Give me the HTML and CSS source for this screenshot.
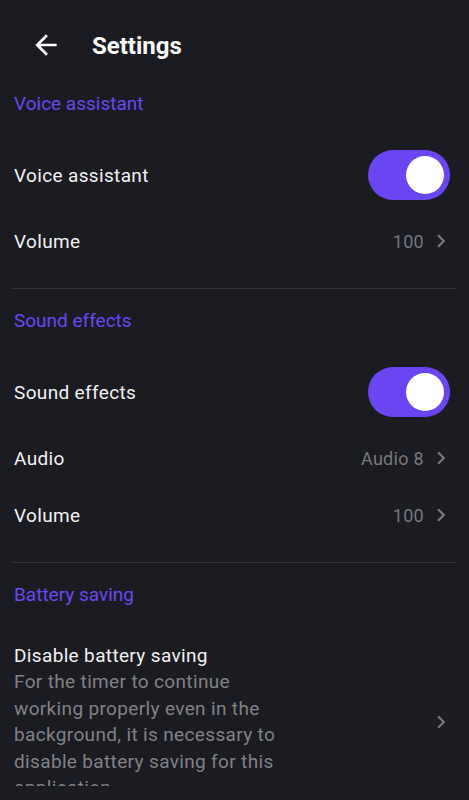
FILE: index.html
```html
<!DOCTYPE html>
<html lang="en">
<head>
<meta charset="utf-8">
<title>Settings</title>
<link rel="stylesheet" href="styles.css">
</head>
<body>
<div class="screen">
  <header class="topbar">
    <svg class="back" viewBox="0 0 24 24" aria-hidden="true"><path d="M20 11H7.83l5.59-5.59L12 4l-8 8 8 8 1.41-1.41L7.83 13H20v-2z"/></svg>
    <h1 class="title">Settings</h1>
  </header>

  <section class="section">
    <h2 class="section-title">Voice assistant</h2>
    <div class="row row-toggle">
      <span class="label">Voice assistant</span>
      <span class="toggle on"><span class="knob"></span></span>
    </div>
    <div class="row">
      <span class="label">Volume</span>
      <span class="value">100</span>
      <svg class="chev" viewBox="0 0 24 24" aria-hidden="true"><path d="M10 6L8.59 7.41 13.17 12l-4.58 4.59L10 18l6-6z"/></svg>
    </div>
  </section>
  <hr class="divider">

  <section class="section">
    <h2 class="section-title">Sound effects</h2>
    <div class="row row-toggle">
      <span class="label">Sound effects</span>
      <span class="toggle on"><span class="knob"></span></span>
    </div>
    <div class="row">
      <span class="label">Audio</span>
      <span class="value">Audio 8</span>
      <svg class="chev" viewBox="0 0 24 24" aria-hidden="true"><path d="M10 6L8.59 7.41 13.17 12l-4.58 4.59L10 18l6-6z"/></svg>
    </div>
    <div class="row">
      <span class="label">Volume</span>
      <span class="value">100</span>
      <svg class="chev" viewBox="0 0 24 24" aria-hidden="true"><path d="M10 6L8.59 7.41 13.17 12l-4.58 4.59L10 18l6-6z"/></svg>
    </div>
  </section>
  <hr class="divider">

  <section class="section">
    <h2 class="section-title">Battery saving</h2>
    <div class="row row-multi">
      <div class="text">
        <div class="label">Disable battery saving</div>
        <div class="desc">For the timer to continue working properly even in the background, it is necessary to disable battery saving for this application</div>
      </div>
      <svg class="chev" viewBox="0 0 24 24" aria-hidden="true"><path d="M10 6L8.59 7.41 13.17 12l-4.58 4.59L10 18l6-6z"/></svg>
    </div>
  </section>
</div>
</body>
</html>
```

FILE: styles.css
```css
* { box-sizing: border-box; }
html, body {
  margin: 0;
  padding: 0;
  background: #1b1c21;
  height: 800px;
}
body {
  font-family: Roboto, "Noto Sans", sans-serif;
  color: #f1f1f3;
}
.screen {
  height: 786px;
  overflow: hidden;
}
.topbar {
  height: 90px;
  display: flex;
  align-items: center;
  padding-left: 30px;
}
.back {
  width: 32px;
  height: 32px;
  fill: #ffffff;
}
.title {
  margin: 0 0 0 30px;
  padding-top: 2px;
  font-size: 24px;
  font-weight: 700;
  color: #ffffff;
}
.section {
  display: flex;
  flex-direction: column;
}
.section-title {
  margin: 0 0 21px 0;
  padding: 1px 0 0 14px;
  height: 27px;
  line-height: 26px;
  font-size: 19px;
  font-weight: 400;
  color: #6a46f2;
}
.divider + .section .section-title { margin-top: 18px; }
.divider {
  border: 0;
  height: 1px;
  background: #35363b;
  margin: 19px 13px 0 13px;
}
.row {
  display: flex;
  align-items: center;
  height: 57px;
  padding: 0 15px 0 14px;
}
.row-toggle { height: 74px; }
.label {
  flex: 1;
  padding-top: 2px;
  font-size: 19px;
  line-height: 26px;
  letter-spacing: 0.35px;
  color: #f1f1f3;
}
.value {
  padding-top: 2px;
  font-size: 18px;
  color: #77777c;
  letter-spacing: 0.3px;
}
.chev {
  width: 26px;
  height: 26px;
  fill: #77777c;
  margin-left: 4px;
  flex: none;
}
.toggle {
  width: 82px;
  height: 50px;
  border-radius: 25px;
  background: #6a46f2;
  display: flex;
  align-items: center;
  justify-content: flex-end;
  padding-right: 6px;
  margin-right: 4px;
}
.knob {
  width: 38px;
  height: 38px;
  border-radius: 50%;
  background: #ffffff;
}
.row-multi {
  height: auto;
  padding-top: 13px;
  padding-bottom: 13px;
  align-items: center;
}
.text { flex: 1; }
.row-multi .label { padding-top: 1px; line-height: 26px; }
.desc {
  max-width: 275px;
  font-size: 19px;
  line-height: 26.5px;
  letter-spacing: 0.35px;
  color: #818186;
}
```
